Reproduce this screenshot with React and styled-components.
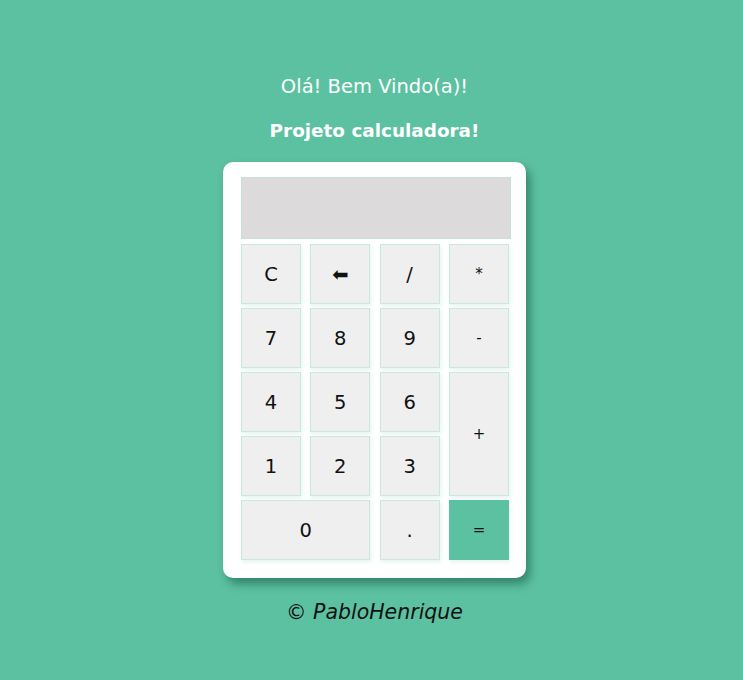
import React from "react";
import styled, { createGlobalStyle } from "styled-components";

const GlobalStyle = createGlobalStyle`
  html, body {
    margin: 0;
    padding: 0;
    background: #5cc1a1;
  }
  body {
    font-family: "DejaVu Sans", "Open Sans", sans-serif;
  }
`;

const Page = styled.main`
  display: flex;
  flex-direction: column;
  align-items: center;
  padding: 75px 0 0 6px;
  min-height: 680px;
  box-sizing: border-box;
`;

const Hello = styled.h2`
  margin: 0;
  font-size: 19.5px;
  font-weight: 400;
  color: #fff;
  line-height: 24px;
`;

const Title = styled.h1`
  margin: 20px 0 0;
  font-size: 18.4px;
  font-weight: 700;
  color: #fff;
  line-height: 24px;
`;

const Card = styled.section`
  margin-top: 19px;
  width: 303px;
  box-sizing: border-box;
  padding: 15px 15px 18px 18px;
  background: #fff;
  border-radius: 10px;
  box-shadow: 4px 6px 10px rgba(0, 60, 40, 0.45);
`;

const Display = styled.div`
  width: 270px;
  height: 62px;
  box-sizing: border-box;
  background: #dcdadb;
  border: 1px solid #c3e2d7;
`;

const Keys = styled.div`
  margin-top: 5px;
  display: grid;
  grid-template-columns: repeat(4, 60px);
  grid-auto-rows: 60px;
  column-gap: 9.33px;
  row-gap: 4px;
`;

const Key = styled.button`
  box-sizing: border-box;
  margin: 0;
  padding: 0;
  font-family: inherit;
  font-size: ${({ $small }) => ($small ? "15px" : "19.5px")};
  color: #111;
  background: ${({ $accent }) => ($accent ? "#5cc1a1" : "#efefef")};
  border: 1px solid ${({ $accent }) => ($accent ? "#5cc1a1" : "#cbe8de")};
  box-shadow: 1px 2px 4px rgba(92, 193, 161, 0.18);
  grid-column: ${({ $wide }) => ($wide ? "span 2" : "auto")};
  grid-row: ${({ $tall }) => ($tall ? "span 2" : "auto")};
  cursor: pointer;
`;

const Footer = styled.p`
  margin: 22px 0 0;
  font-size: 20.5px;
  line-height: 24px;
  font-style: italic;
  color: #111;
`;

const App = () => {
  return (
    <>
      <GlobalStyle />
      <Page>
        <Hello>Olá! Bem Vindo(a)!</Hello>
        <Title>Projeto calculadora!</Title>

        <Card>
          <Display />
          <Keys>
            <Key>C</Key>
            <Key>&#x2B05;</Key>
            <Key>/</Key>
            <Key $small>*</Key>

            <Key>7</Key>
            <Key>8</Key>
            <Key>9</Key>
            <Key $small>-</Key>

            <Key>4</Key>
            <Key>5</Key>
            <Key>6</Key>
            <Key $small $tall>+</Key>

            <Key>1</Key>
            <Key>2</Key>
            <Key>3</Key>

            <Key $wide>0</Key>
            <Key>.</Key>
            <Key $small $accent>=</Key>
          </Keys>
        </Card>

        <Footer>© PabloHenrique</Footer>
      </Page>
    </>
  );
};

export default App;
